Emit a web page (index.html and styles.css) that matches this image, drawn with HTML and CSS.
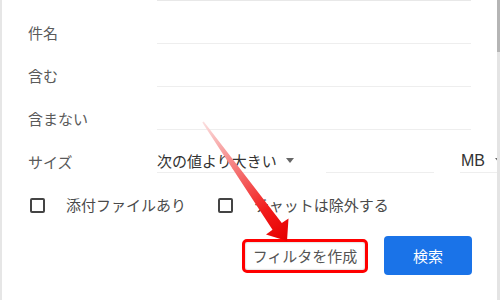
FILE: index.html
```html
<!DOCTYPE html>
<html lang="ja">
<head>
    <meta charset="UTF-8" />
    <meta name="viewport" content="width=device-width, initial-scale=1.0" />
    <title>フィルタ</title>
    <link rel="stylesheet" href="styles.css">
</head>
<body>
    <div class="page">
        <main class="panel">
            <div class="form">
                <div class="top-line"></div>
                <div class="row">
                    <span class="label">件名</span>
                    <span class="field"></span>
                </div>
                <div class="row">
                    <span class="label">含む</span>
                    <span class="field"></span>
                </div>
                <div class="row">
                    <span class="label">含まない</span>
                    <span class="field"></span>
                </div>
                <div class="row size-row">
                    <span class="label">サイズ</span>
                    <div class="size-fields">
                        <span class="select select-cmp">次の値より大きい<i class="caret"></i></span>
                        <span class="field size-input"></span>
                        <span class="select select-unit">MB<i class="caret"></i></span>
                    </div>
                </div>
                <div class="checks">
                    <label class="check"><span class="box"></span>添付ファイルあり</label>
                    <label class="check"><span class="box"></span>チャットは除外する</label>
                </div>
                <div class="actions">
                    <button class="btn-filter">フィルタを作成</button>
                    <button class="btn-search">検索</button>
                </div>
            </div>
        </main>
        <div class="scrollbar"><div class="thumb"></div></div>

        <!-- 注釈の矢印 -->
        <svg class="arrow" width="500" height="300" viewBox="0 0 500 300">
            <defs>
                <linearGradient id="arrowGrad" gradientUnits="userSpaceOnUse" x1="203" y1="122" x2="286" y2="240">
                    <stop offset="0" stop-color="#fbe0e0" />
                    <stop offset="0.45" stop-color="#f46a6a" />
                    <stop offset="0.75" stop-color="#f21c1c" />
                    <stop offset="1" stop-color="#e60000" />
                </linearGradient>
            </defs>
            <polygon points="202.3,122.6 203.7,121.4 281.8,223 288.5,218.5 287,241 266,234.5 272.5,229.8" fill="url(#arrowGrad)" />
        </svg>
    </div>
</body>
</html>
```

FILE: styles.css
```css
body {
    margin: 0;
    background-color: #ffffff;
    font-family: 'Noto Sans CJK JP', 'Liberation Sans', sans-serif;
    color: #555;
}

.page {
    position: relative;
    display: flex;
    width: 500px;
    height: 300px;
    overflow: hidden;
}

.panel {
    flex: 1;
    border-left: 2px solid #e6e6e6;
    overflow: hidden;
}

.form {
    width: 444px;
    padding-left: 26px;
}

.top-line {
    margin-left: 129px;
    width: 314px;
    border-top: 1px solid #e8e8e8;
}

.row {
    display: grid;
    grid-template-columns: 129px 314px;
    align-items: end;
    height: 43px;
}

.label {
    font-size: 15px;
    line-height: 20px;
    padding-bottom: 1px;
    color: #5a5a5a;
}

.field {
    display: block;
    height: 100%;
    box-sizing: border-box;
    border-bottom: 1px solid #eeeeee;
}

.size-fields {
    display: flex;
    gap: 26px;
    height: 100%;
    align-items: end;
    white-space: nowrap;
}

.size-fields > * {
    flex-shrink: 0;
}

.select {
    display: flex;
    align-items: center;
    justify-content: space-between;
    box-sizing: border-box;
    height: 22px;
    padding-bottom: 2px;
    border-bottom: 1px solid #eeeeee;
    font-size: 15px;
    line-height: 20px;
    color: #333;
}

.select-cmp {
    width: 143px;
    padding-right: 6px;
}

.select-unit {
    width: 60px;
    padding-left: 1px;
    padding-right: 18px;
    font-family: 'Liberation Sans', sans-serif;
    font-size: 16px;
}

.size-input {
    width: 108px;
}

.caret {
    width: 0;
    height: 0;
    border-left: 4px solid transparent;
    border-right: 4px solid transparent;
    border-top: 5px solid #666;
    margin-left: 8px;
}

.select-unit .caret {
    margin-left: 10px;
}

.checks {
    display: flex;
    gap: 32px;
    height: 16px;
    margin-top: 24px;
    margin-left: 2px;
}

.check {
    display: flex;
    align-items: center;
    gap: 21px;
    font-size: 15px;
    line-height: 16px;
    color: #4a4a4a;
}

.box {
    width: 15px;
    height: 15px;
    box-sizing: border-box;
    border: 2px solid #444;
    border-radius: 2px;
}

.actions {
    display: flex;
    justify-content: flex-end;
    align-items: center;
    gap: 16px;
    margin-top: 23px;
    width: 444px;
}

.btn-filter {
    width: 126px;
    height: 34px;
    border: 3px solid #ff0000;
    border-radius: 5px;
    background-color: #ffffff;
    box-shadow: inset 0 0 2px rgba(0, 0, 0, 0.35);
    font-family: inherit;
    font-size: 15px;
    color: #555;
    padding: 0;
}

.btn-search {
    width: 88px;
    height: 39px;
    border: none;
    border-radius: 4px;
    background-color: #1a73e8;
    font-family: inherit;
    font-size: 15px;
    color: #ffffff;
    padding: 0;
}

.scrollbar {
    width: 3px;
    background-color: #e4e4e4;
}

.thumb {
    height: 52px;
    background-color: #b5b5b5;
}

.arrow {
    position: absolute;
    top: 0;
    left: 0;
    pointer-events: none;
}
```
